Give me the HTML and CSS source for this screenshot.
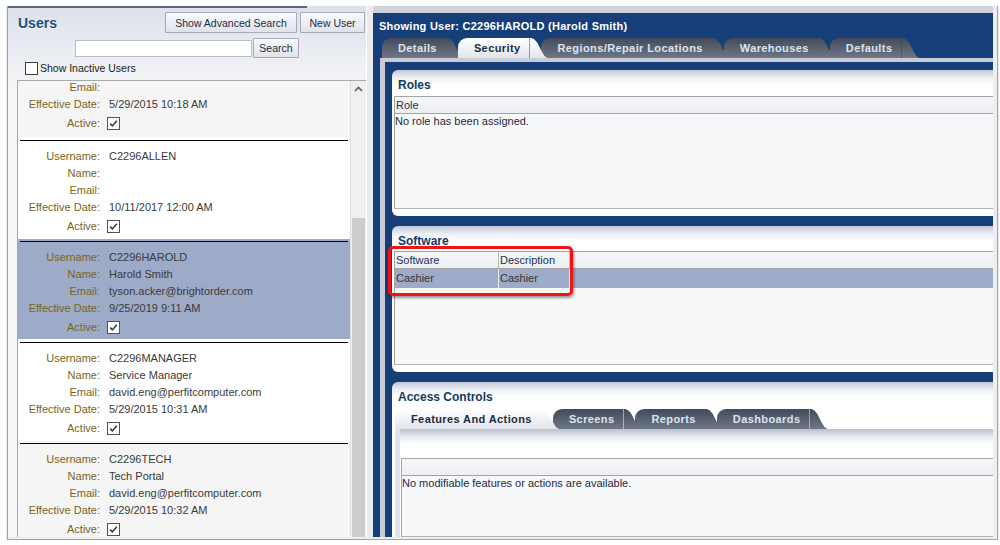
FILE: index.html
```html
<!DOCTYPE html>
<html lang="en">
<head>
    <meta charset="UTF-8">
    <title>Users</title>
    <link rel="stylesheet" href="styles.css">
</head>
<body>
    <div class="frame">
        <!-- user list -->
        <div class="users">
            <div class="users-bar"></div>
            <div class="users-head">
                <h1>Users</h1>
                <div class="head-btns">
                    <button class="btn btn-adv">Show Advanced Search</button>
                    <button class="btn btn-new">New User</button>
                </div>
            </div>
            <div class="search-row">
                <input type="text" class="search-input">
                <button class="btn btn-search">Search</button>
            </div>
            <label class="inactive">
                <svg class="box" width="13" height="13" viewBox="0 0 13 13"><rect x=".5" y=".5" width="12" height="12" fill="#fff" stroke="#3c3c3c"/></svg>
                Show Inactive Users
            </label>
            <div class="user-list">
                <div class="user-scroll">
                    <div class="user alt first">
                        <div class="user-rows">
                            <div class="row"><span class="lbl">Email:</span><span class="val"></span></div>
                            <div class="row"><span class="lbl">Effective Date:</span><span class="val">5/29/2015 10:18 AM</span></div>
                            <div class="row row-active"><span class="lbl">Active:</span><span class="val"><svg class="box" width="13" height="13" viewBox="0 0 13 13"><rect x=".5" y=".5" width="12" height="12" fill="#fff" stroke="#4a5466"/><path d="M3.2 6.6l2.2 2.3L9.8 3.8" fill="none" stroke="#3b3b3b" stroke-width="1.6"/></svg></span></div>
                        </div>
                    </div>
                    <div class="user">
                        <div class="user-sep"></div>
                        <div class="user-rows">
                            <div class="row"><span class="lbl">Username:</span><span class="val">C2296ALLEN</span></div>
                            <div class="row"><span class="lbl">Name:</span><span class="val"></span></div>
                            <div class="row"><span class="lbl">Email:</span><span class="val"></span></div>
                            <div class="row"><span class="lbl">Effective Date:</span><span class="val">10/11/2017 12:00 AM</span></div>
                            <div class="row row-active"><span class="lbl">Active:</span><span class="val"><svg class="box" width="13" height="13" viewBox="0 0 13 13"><rect x=".5" y=".5" width="12" height="12" fill="#fff" stroke="#4a5466"/><path d="M3.2 6.6l2.2 2.3L9.8 3.8" fill="none" stroke="#3b3b3b" stroke-width="1.6"/></svg></span></div>
                        </div>
                    </div>
                    <div class="user selected">
                        <div class="user-sep"></div>
                        <div class="user-rows">
                            <div class="row"><span class="lbl">Username:</span><span class="val">C2296HAROLD</span></div>
                            <div class="row"><span class="lbl">Name:</span><span class="val">Harold Smith</span></div>
                            <div class="row"><span class="lbl">Email:</span><span class="val">tyson.acker@brightorder.com</span></div>
                            <div class="row"><span class="lbl">Effective Date:</span><span class="val">9/25/2019 9:11 AM</span></div>
                            <div class="row row-active"><span class="lbl">Active:</span><span class="val"><svg class="box" width="13" height="13" viewBox="0 0 13 13"><rect x=".5" y=".5" width="12" height="12" fill="#fff" stroke="#4a5466"/><path d="M3.2 6.6l2.2 2.3L9.8 3.8" fill="none" stroke="#3b3b3b" stroke-width="1.6"/></svg></span></div>
                        </div>
                    </div>
                    <div class="user">
                        <div class="user-sep"></div>
                        <div class="user-rows">
                            <div class="row"><span class="lbl">Username:</span><span class="val">C2296MANAGER</span></div>
                            <div class="row"><span class="lbl">Name:</span><span class="val">Service Manager</span></div>
                            <div class="row"><span class="lbl">Email:</span><span class="val">david.eng@perfitcomputer.com</span></div>
                            <div class="row"><span class="lbl">Effective Date:</span><span class="val">5/29/2015 10:31 AM</span></div>
                            <div class="row row-active"><span class="lbl">Active:</span><span class="val"><svg class="box" width="13" height="13" viewBox="0 0 13 13"><rect x=".5" y=".5" width="12" height="12" fill="#fff" stroke="#4a5466"/><path d="M3.2 6.6l2.2 2.3L9.8 3.8" fill="none" stroke="#3b3b3b" stroke-width="1.6"/></svg></span></div>
                        </div>
                    </div>
                    <div class="user alt">
                        <div class="user-sep"></div>
                        <div class="user-rows">
                            <div class="row"><span class="lbl">Username:</span><span class="val">C2296TECH</span></div>
                            <div class="row"><span class="lbl">Name:</span><span class="val">Tech Portal</span></div>
                            <div class="row"><span class="lbl">Email:</span><span class="val">david.eng@perfitcomputer.com</span></div>
                            <div class="row"><span class="lbl">Effective Date:</span><span class="val">5/29/2015 10:32 AM</span></div>
                            <div class="row row-active"><span class="lbl">Active:</span><span class="val"><svg class="box" width="13" height="13" viewBox="0 0 13 13"><rect x=".5" y=".5" width="12" height="12" fill="#fff" stroke="#4a5466"/><path d="M3.2 6.6l2.2 2.3L9.8 3.8" fill="none" stroke="#3b3b3b" stroke-width="1.6"/></svg></span></div>
                        </div>
                    </div>
                </div>
                <div class="scrollbar">
                    <div class="scroll-up">
                        <svg width="9" height="6" viewBox="0 0 9 6"><polyline points="1,5 4.5,1.5 8,5" fill="none" stroke="#5f5f5f" stroke-width="1.7"/></svg>
                    </div>
                    <div class="thumb"></div>
                </div>
            </div>
        </div>

        <div class="splitter"></div>

        <!-- user detail -->
        <div class="detail">
            <div class="detail-title">Showing User: C2296HAROLD (Harold Smith)</div>
            <div class="tabs">
                <div class="tab">Details</div>
                <div class="tab active">Security</div>
                <div class="tab">Regions/Repair Locations</div>
                <div class="tab">Warehouses</div>
                <div class="tab">Defaults</div>
            </div>
            <div class="tab-body">
                <div class="panel roles">
                    <div class="panel-title">Roles</div>
                    <div class="grid">
                        <div class="grid-head"><span class="cell">Role</span></div>
                        <div class="grid-empty">No role has been assigned.</div>
                    </div>
                </div>

                <div class="panel software">
                    <div class="panel-title">Software</div>
                    <div class="grid">
                        <div class="grid-head">
                            <span class="cell col-sw">Software</span>
                            <span class="cell col-desc">Description</span>
                        </div>
                        <div class="grid-row">
                            <span class="cell col-sw">Cashier</span>
                            <span class="cell col-desc">Cashier</span>
                        </div>
                    </div>
                    <div class="highlight"></div>
                </div>

                <div class="panel access">
                    <div class="panel-title">Access Controls</div>
                    <div class="tabs subtabs">
                        <div class="tab active">Features And Actions</div>
                        <div class="tab">Screens</div>
                        <div class="tab">Reports</div>
                        <div class="tab">Dashboards</div>
                    </div>
                    <div class="sub-body">
                        <div class="grid">
                            <div class="grid-head"></div>
                            <div class="grid-empty">No modifiable features or actions are available.</div>
                        </div>
                    </div>
                </div>
            </div>
        </div>
    </div>
</body>
</html>
```

FILE: styles.css
```css
* {
    box-sizing: border-box;
}

body {
    margin: 0;
    background: #fff;
    font-family: "Liberation Sans", Arial, sans-serif;
    font-size: 11px;
    color: #333;
}

.frame {
    display: flex;
    width: 991px;
    height: 534px;
    margin: 6px 0 0 7px;
    padding: 0 4px 2px 0;
    background: #eceef1;
    border: 1px solid #a4a4a4;
    border-top: 0;
    box-shadow: 0 1px 2px rgba(0, 0, 0, 0.25);
    overflow: hidden;
}

/* left column */
.users {
    width: 358px;
    display: flex;
    flex-direction: column;
    background: linear-gradient(#dce1ea, #eef0f4 60px, #f5f6f8 80px);
    font-size: 10.5px;
}

.users-bar {
    width: 299px;
    height: 2px;
    background: #5e6776;
}

.users-head {
    display: flex;
    align-items: center;
    justify-content: space-between;
    height: 21px;
    margin-top: 4px;
    padding: 0 1px 0 10px;
}

.users-head h1 {
    margin: 0;
    font-size: 14px;
    color: #1f4c79;
    text-shadow: 0 1px 0 #fff;
}

.head-btns {
    display: flex;
    gap: 3px;
}

.btn {
    height: 21px;
    padding: 0;
    border: 1px solid #a3aab6;
    border-radius: 1px;
    background: linear-gradient(#f9fafc, #dfe3ea);
    font: 10.5px "Liberation Sans", Arial, sans-serif;
    color: #1b2b42;
}

.btn-adv {
    width: 132px;
}

.btn-new {
    width: 65px;
}

.search-row {
    display: flex;
    align-items: center;
    justify-content: center;
    height: 20px;
    margin-top: 5px;
}

.search-input {
    width: 177px;
    height: 17px;
    margin: 0 1px 0 0;
    padding: 0;
    border: 1px solid #b8bec8;
    background: #fff;
}

.btn-search {
    width: 46px;
    height: 20px;
}

.inactive {
    display: flex;
    align-items: center;
    gap: 2px;
    height: 14px;
    margin: 3px 0 0 17px;
    color: #1a1a1a;
}

.user-list {
    flex: 1;
    display: flex;
    min-height: 0;
    margin: 5px 0 0 9px;
    border: 1px solid #a9a9a9;
    border-right: 0;
    border-bottom: 0;
    background: #fff;
    overflow: hidden;
}

.user-scroll {
    flex: 1;
}

.user {
    padding: 2px;
    margin-bottom: 1px;
    background: #fff;
    font-size: 11px;
}

.user.alt {
    background: #f5f5f5;
}

.user.selected {
    background: #9dabc8;
}

.user.first {
    margin-top: -2px;
    padding: 0 2px 4px;
}

.user-sep {
    height: 1px;
    background: #000;
}

.user-rows {
    padding-top: 7px;
}

.first .user-rows {
    padding-top: 0;
}

.row {
    display: flex;
    height: 17px;
    line-height: 17px;
}

.lbl {
    width: 80px;
    text-align: right;
    color: #7a641a;
}

.val {
    margin-left: 9px;
    color: #3a3a3a;
    white-space: nowrap;
}

.row-active {
    height: 20px;
    align-items: center;
}

.row-active .val {
    display: flex;
    margin-left: 7px;
}

.box {
    display: block;
}

.scrollbar {
    width: 16px;
    display: flex;
    flex-direction: column;
    background: #f0f0f0;
    border-left: 1px solid #e0e0e0;
}

.scroll-up {
    height: 137px;
    display: flex;
    justify-content: center;
    padding-top: 5px;
}

.thumb {
    flex: 1;
    margin: 0 1px;
    background: #cdcdcd;
}

.splitter {
    width: 7px;
    background: #ebebeb;
    border-left: 1px solid #fff;
}

/* right column */
.detail {
    flex: 1;
    min-width: 0;
    display: flex;
    flex-direction: column;
    background: #163e79;
    border-top: 7px solid #cfd3da;
}

.detail-title {
    height: 25px;
    padding: 6px 0 0 6px;
    line-height: 14px;
    font-size: 11px;
    font-weight: bold;
    letter-spacing: 0.25px;
    color: #fff;
    white-space: nowrap;
}

.tabs {
    display: flex;
    height: 20px;
    padding-left: 9px;
}

.tab {
    position: relative;
    height: 20px;
    padding: 0 9px 0 16px;
    margin-right: 12px;
    line-height: 21px;
    font-weight: bold;
    letter-spacing: 0.4px;
    color: #dbe4f2;
    background: linear-gradient(#434b5b, #6f7685);
    border-top-left-radius: 9px;
    white-space: nowrap;
}

.tab::after {
    content: "";
    position: absolute;
    top: 0;
    left: 100%;
    width: 18px;
    height: 100%;
    background: inherit;
    clip-path: polygon(0 0, 2px 0, 5px 1.5px, 8px 5px, 12px 13px, 15px 18px, 18px 20px, 0 20px);
}

.tab.active {
    z-index: 2;
    color: #1b2c47;
    background: linear-gradient(#fff, #e2e5eb);
}

.tab-body {
    flex: 1;
    min-height: 0;
    display: flex;
    flex-direction: column;
    margin-left: 7px;
    padding: 8px 0 0 7px;
    border-top: 4px solid #c7ccd6;
    border-left: 5px solid #c7ccd6;
}

.panel {
    position: relative;
    padding: 0 0 7px 2px;
    background: linear-gradient(#c2c8d5, #edf0f4 8px, #fff 15px);
    border-radius: 6px 0 0 6px;
}

.panel + .panel {
    margin-top: 10px;
}

.panel-title {
    height: 26px;
    padding: 8px 0 0 4px;
    line-height: 14px;
    font-size: 12px;
    font-weight: bold;
    color: #123a63;
}

.software .panel-title {
    height: 25px;
}

.access .panel-title {
    height: 27px;
}

.grid {
    border-top: 1px solid #a4a4a4;
    border-left: 1px solid #a4a4a4;
    border-bottom: 1px solid #b4b4b4;
    background: #f7f8fa;
    color: #1c2a44;
}

.roles .grid {
    height: 113px;
}

.software .grid {
    height: 114px;
}

.grid-head {
    display: flex;
    height: 17px;
    line-height: 16px;
    border-bottom: 1px solid #a4a4a4;
    background: linear-gradient(#f6f7f9, #eceef2);
    color: #1c3352;
}

.cell {
    padding-left: 1px;
}

.col-sw {
    width: 104px;
    border-right: 1px solid #b9b9b9;
}

.col-desc {
    width: 71px;
    border-right: 1px solid #b9b9b9;
}

.grid-row {
    display: flex;
    height: 19px;
    line-height: 19px;
    background: #9dabc8;
    color: #333;
}

.grid-row .cell {
    border-right-color: #e4e8ef;
}

.grid-empty {
    line-height: 15px;
}

.highlight {
    position: absolute;
    left: -4px;
    top: 20px;
    width: 185px;
    height: 50px;
    border: 3px solid #f01414;
    border-radius: 5px;
    box-shadow: 1px 2px 3px rgba(0, 0, 0, 0.4);
}

.access {
    flex: 1;
    display: flex;
    flex-direction: column;
    padding-bottom: 0;
    border-radius: 6px 0 0 0;
}

.subtabs {
    padding-left: 1px;
}

.sub-body {
    flex: 1;
    display: flex;
    flex-direction: column;
    margin-left: 1px;
    padding-top: 29px;
    border-left: 5px solid #e0e3e9;
    background: linear-gradient(#b9c0ce, #e9ecf1 8px, #fff 16px);
}

.sub-body .grid {
    flex: 1;
    margin-left: 1px;
}
```
